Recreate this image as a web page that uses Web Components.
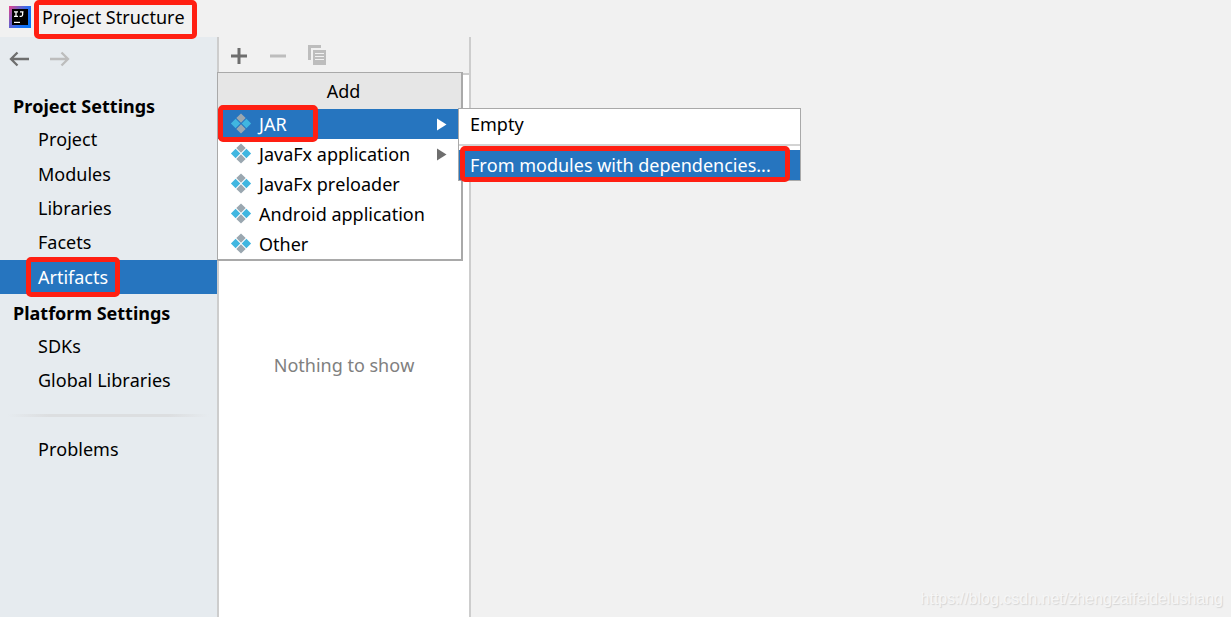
<!DOCTYPE html>
<html lang="en">
<head>
<meta charset="utf-8">
<title>Project Structure</title>
<style>
  html, body { height: 100%; margin: 0; }
  body { font: 18px/24px "Noto Sans", "Open Sans", sans-serif; font-kerning: none; color: #000; background: #f1f1f1; overflow: hidden; }
</style>
</head>
<body>
<project-window>
  <title-bar slot="title">Project Structure</title-bar>
  <side-nav slot="nav">
    <nav-group heading="Project Settings" class="first">
      <nav-item>Project</nav-item>
      <nav-item>Modules</nav-item>
      <nav-item>Libraries</nav-item>
      <nav-item>Facets</nav-item>
      <nav-item selected>Artifacts</nav-item>
    </nav-group>
    <nav-group heading="Platform Settings">
      <nav-item>SDKs</nav-item>
      <nav-item>Global Libraries</nav-item>
    </nav-group>
    <nav-rule></nav-rule>
    <nav-item>Problems</nav-item>
  </side-nav>
  <artifact-panel slot="list">
    <popup-menu slot="menu" heading="Add">
      <menu-item icon arrow selected marked>JAR
        <sub-menu slot="sub">
          <menu-item>Empty</menu-item>
          <menu-rule></menu-rule>
          <menu-item selected marked="wide">From modules with dependencies...</menu-item>
        </sub-menu>
      </menu-item>
      <menu-item icon arrow>JavaFx application</menu-item>
      <menu-item icon>JavaFx preloader</menu-item>
      <menu-item icon>Android application</menu-item>
      <menu-item icon>Other</menu-item>
    </popup-menu>
  </artifact-panel>
  <water-mark slot="detail">https://blog.csdn.net/zhengzaifeidelushang</water-mark>
</project-window>

<script>
const define = (name, render) => customElements.define(name, class extends HTMLElement {
  constructor() {
    super();
    this.attachShadow({ mode: 'open' });
  }
  connectedCallback() {
    this.shadowRoot.innerHTML = '<style>*{box-sizing:border-box}:host{box-sizing:border-box}</style>' + render(this);
  }
});

define('project-window', () => `
  <style>
    :host { display: flex; flex-direction: column; height: 100vh; }
    main { flex: 1; display: grid; grid-template-columns: 219px 252px 1fr; min-height: 0; }
    .detail { display: flex; align-items: flex-end; justify-content: flex-end; }
  </style>
  <slot name="title"></slot>
  <main>
    <slot name="nav"></slot>
    <slot name="list"></slot>
    <section class="detail"><slot name="detail"></slot></section>
  </main>`);

define('title-bar', () => `
  <style>
    :host { display: flex; align-items: flex-start; height: 37px; padding-left: 9px; }
    svg { margin-top: 6px; width: 22px; height: 22px; }
    h1 { position: relative; margin: 5px 0 0 11px; font-size: 18px; line-height: 24px; font-weight: 400; }
    red-frame { inset: -5px -12px -10px -8px; }
  </style>
  <svg viewBox="0 0 22 22" aria-hidden="true">
    <defs><linearGradient id="g" x1="0" y1="0" x2="1" y2="0.6">
      <stop offset="0" stop-color="#e8408a"/><stop offset=".35" stop-color="#7a5cc0"/><stop offset=".65" stop-color="#2f6bef"/><stop offset="1" stop-color="#0a74f5"/>
    </linearGradient></defs>
    <rect width="22" height="22" fill="url(#g)"/>
    <rect x="3" y="3" width="16" height="16" fill="#000"/>
    <path d="M5 5.8h4M7 5.8v4.500M5 10.300h4M11 5.8h3.500M13.600 5.8v3q0 1.500-1.500 1.500h-1.500" fill="none" stroke="#fff" stroke-width="1.300"/>
    <path d="M5 16.4h6" stroke="#fff" stroke-width="1.2"/>
  </svg>
  <h1><slot></slot><red-frame></red-frame></h1>`);

define('red-frame', () => `
  <style>
    :host { display: block; position: absolute; z-index: 2; border: 5px solid #ff1f12; border-radius: 5px; pointer-events: none; }
  </style>`);

define('side-nav', () => `
  <style>
    :host { display: flex; flex-direction: column; background: #e6ebef; border-right: 2px solid #cdcdcd; }
    .history { display: flex; gap: 21px; padding: 12px 0 0 9px; height: 50px; }
    button { display: block; width: 20px; height: 20px; padding: 0; border: 0; background: none; color: #6e6e6e; }
    button:disabled { color: #bdbdbd; }
    svg { display: block; }
  </style>
  <div class="history">
    <button aria-label="Back"><svg width="20" height="20" viewBox="0 0 20 20" fill="none" stroke="currentColor" stroke-width="2.3"><path d="M20 10H2M8.500 3.500L2 10l6.500 6.500"/></svg></button>
    <button aria-label="Forward" disabled><svg width="20" height="20" viewBox="0 0 20 20" fill="none" stroke="currentColor" stroke-width="2.3"><path d="M0 10h18M11.500 3.500L18 10l-6.500 6.500"/></svg></button>
  </div>
  <nav><slot></slot></nav>`);

define('nav-group', el => `
  <style>
    :host { display: block; }
    h2 { margin: 0; padding: 3px 0 0 13px; font-size: 18px; line-height: 32px; font-weight: 700; }
    div { display: grid; grid-auto-rows: 1fr; }
    :host(.first) div { min-height: 172px; }
  </style>
  <h2>${el.getAttribute('heading')}</h2>
  <div><slot></slot></div>`);

define('nav-item', el => `
  <style>
    :host { display: flex; min-height: 34px; }
    :host([selected]) { background: #2675bf; color: #fff; }
    a { flex: 1; display: flex; align-items: center; padding-left: 38px; color: inherit; text-decoration: none; }
    span { position: relative; }
    red-frame { inset: -8px -12px -8px -12px; }
  </style>
  <a href="#"><span><slot></slot>${el.hasAttribute('selected') ? '<red-frame></red-frame>' : ''}</span></a>`);

define('nav-rule', () => `
  <style>
    :host { display: block; height: 3px; margin: 17px 8px 15px; background: linear-gradient(90deg, #dcdfe000, #dcdee0 20%, #dcdee0 80%, #dcdfe000); }
  </style>`);

define('artifact-panel', () => `
  <style>
    :host { display: flex; flex-direction: column; position: relative; background: #fff; border-right: 2px solid #cdcdcd; }
    .tools { display: flex; gap: 19px; height: 38px; padding: 8px 0 0 10px; background: #f1f1f1; border-bottom: 2px solid #cdcdcd; }
    button { width: 20px; height: 20px; padding: 0; border: 0; background: none; color: #6e6e6e; }
    button:disabled { color: #bdbdbd; }
    svg { display: block; }
    p { margin: 278px 0 0; text-align: center; color: #808080; }
    .menu { position: absolute; left: -2px; top: 35px; }
  </style>
  <div class="tools">
    <button aria-label="Add"><svg width="20" height="20" viewBox="0 0 20 20"><path d="M2 11h16M10 3v16" stroke="currentColor" stroke-width="3"/></svg></button>
    <button aria-label="Remove" disabled><svg width="20" height="20" viewBox="0 0 20 20"><path d="M2 11h16" stroke="currentColor" stroke-width="3"/></svg></button>
    <button aria-label="Copy" disabled><svg width="20" height="20" viewBox="0 0 20 20"><path d="M1 15V0h13v3H4v12z" fill="currentColor"/><path d="M6 5h13v15H6z" fill="currentColor"/><path d="M8 8.500h9M8 11.500h9M8 14.500h9" stroke="#f1f1f1" stroke-width="1.200"/></svg></button>
  </div>
  <p>Nothing to show</p>
  <div class="menu"><slot name="menu"></slot></div>`);

define('popup-menu', el => `
  <style>
    :host { display: block; width: 246px; background: #fff; border: 1px solid #a9a9a9; border-width: 1px 2px 2px 1px; }
    h2 { margin: 0; padding-left: 8px; background: #e6e6e6; font-size: 18px; line-height: 36px; font-weight: 400; text-align: center; }
  </style>
  <h2>${el.getAttribute('heading')}</h2>
  <div role="menu"><slot></slot></div>`);

define('sub-menu', () => `
  <style>
    :host { display: block; position: absolute; left: 240px; top: -1px; width: 343px; background: #fff; border: 1px solid #a9a9a9; color: #000; }
  </style>
  <div role="menu"><slot></slot></div>`);

define('menu-rule', () => `
  <style>
    :host { display: block; height: 2px; margin: 5px 0 4px; background: #d3d3d3; }
  </style>`);

define('menu-item', el => `
  <style>
    :host { display: block; position: relative; }
    button { display: flex; align-items: center; width: 100%; height: 30px; padding: 0 11px; border: 0; background: none; color: inherit; font: inherit; font-kerning: inherit; text-align: left; white-space: nowrap; }
    :host([icon]) button { padding: 0 14px 0 12px; }
    :host([selected]) button { background: #2675bf; color: #fff; }
    .icon { margin-right: 7px; }
    .arrow { margin-left: auto; color: #6e6e6e; }
    :host([selected]) .arrow { color: #fff; }
    red-frame { inset: -4px 143px -3px 0; }
    :host([marked=wide]) red-frame { inset: -4px 10px -2px 1px; }
  </style>
  <button role="menuitem">
    ${el.hasAttribute('icon') ? `<svg class="icon" width="22" height="22" viewBox="0 0 22 22" aria-hidden="true">
      <path d="M11 .4l4.700 4.700-4.700 4.700-4.700-4.700zM11 11.200l4.700 4.700-4.700 4.700-4.700-4.700z" fill="#9aa7b0"/>
      <path d="M5.600 5.800l4.700 4.700-4.700 4.700-4.700-4.700zM16.400 5.800l4.700 4.700-4.700 4.700-4.700-4.700z" fill="#40b6e0"/>
    </svg>` : ''}
    <span><slot></slot></span>
    ${el.hasAttribute('arrow') ? '<svg class="arrow" width="10" height="14" viewBox="0 0 10 14" aria-hidden="true"><path d="M0 1.500l9.500 6L0 13.500z" fill="currentColor"/></svg>' : ''}
  </button>
  ${el.hasAttribute('marked') ? '<red-frame></red-frame>' : ''}
  <slot name="sub"></slot>`);

define('water-mark', () => `
  <style>
    :host { display: block; padding: 0 8px 6px 0; font: 16px/24px "Liberation Sans", Arial, sans-serif; color: #f6f6f6; text-shadow: 1px 1px 1px #d4d4d4; }
  </style>
  <slot></slot>`);
</script>
</body>
</html>
